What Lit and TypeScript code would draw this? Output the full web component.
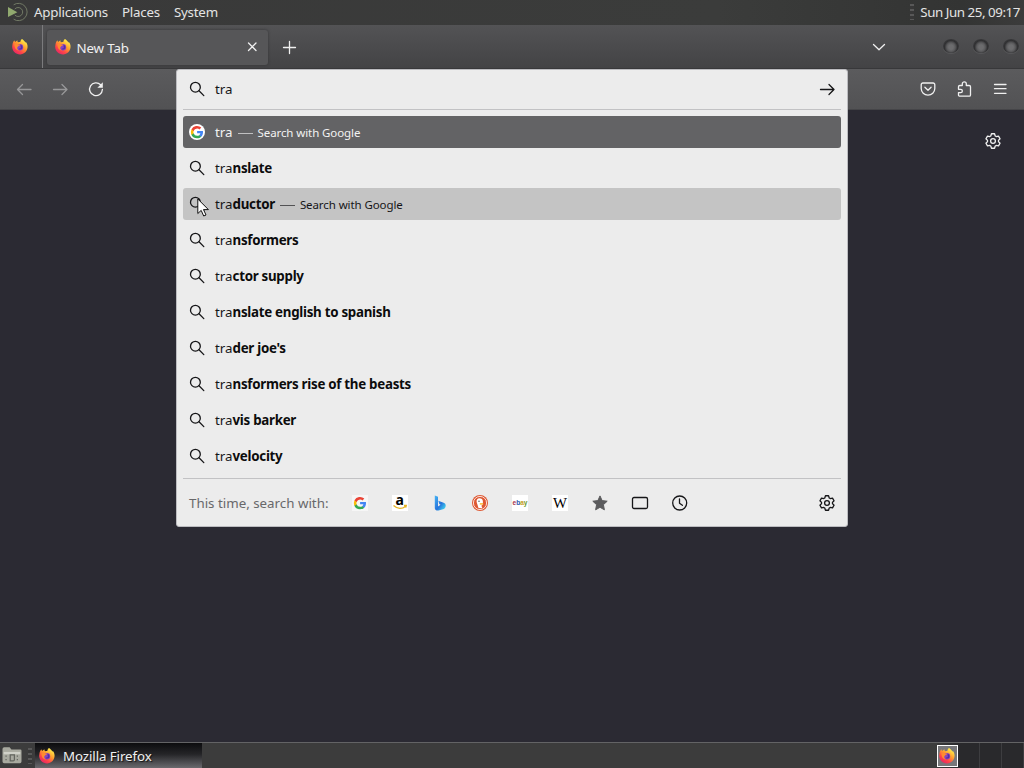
import { css, html, svg, LitElement } from "lit";
import { customElement, property } from "lit/decorators.js";
import { classMap } from "lit/directives/class-map.js";

interface Suggestion {
	typed: string;
	rest: string;
	engine?: string;
	state?: "selected" | "hover";
}

const SUGGESTIONS: Suggestion[] = [
	{ typed: "tra", rest: "", engine: "Search with Google", state: "selected" },
	{ typed: "tra", rest: "nslate" },
	{ typed: "tra", rest: "ductor", engine: "Search with Google", state: "hover" },
	{ typed: "tra", rest: "nsformers" },
	{ typed: "tra", rest: "ctor supply" },
	{ typed: "tra", rest: "nslate english to spanish" },
	{ typed: "tra", rest: "der joe's" },
	{ typed: "tra", rest: "nsformers rise of the beasts" },
	{ typed: "tra", rest: "vis barker" },
	{ typed: "tra", rest: "velocity" },
];

const ONE_OFFS = ["google", "amazon", "bing", "duck", "ebay", "wikipedia", "star", "tabs", "history"];

/** Six-toothed cog outline centred on 8,8. */
const gearPath = (() => {
	const points: string[] = [];
	for (let i = 0; i < 6; i++) {
		for (const [radius, offset] of [[5.5, -24], [7.4, -12], [7.4, 12], [5.5, 24]]) {
			const angle = ((i * 60 - 90 + offset) * Math.PI) / 180;
			points.push(`${(8 + radius * Math.cos(angle)).toFixed(2)} ${(8 + radius * Math.sin(angle)).toFixed(2)}`);
		}
	}
	return `M${points.join("L")}Z`;
})();

const googleG = svg`
	<path fill="#4285f4" d="M14 8.2c0-.5 0-.9-.1-1.3H8.1v2.400h3.300a2.900 2.900 0 0 1-1.200 1.900v1.600h2c1.200-1.100 1.800-2.700 1.800-4.600z"/>
	<path fill="#34a853" d="M8.100 14.200c1.700 0 3.100-.5 4.100-1.500l-2-1.500c-.5.400-1.300.6-2.100.6a3.700 3.700 0 0 1-3.500-2.500H2.500v1.600a6.200 6.200 0 0 0 5.600 3.300z"/>
	<path fill="#fbbc05" d="M4.600 9.300a3.700 3.700 0 0 1 0-2.400V5.300H2.500a6.200 6.200 0 0 0 0 5.600z"/>
	<path fill="#ea4335" d="M8.100 4.400c.9 0 1.800.3 2.400 1l1.800-1.800A6.200 6.200 0 0 0 2.500 5.300l2.100 1.600a3.700 3.700 0 0 1 3.500-2.500z"/>`;

const ICONS: Record<string, unknown> = {
	search: svg`<g class="line"><circle cx="6.400" cy="6.200" r="4.900"/><path d="M10 9.800 14.800 14.600"/></g>`,
	back: svg`<path class="line" d="M15 8.500H1.500M6.500 3.500 1.500 8.500 6.500 13.500"/>`,
	forward: svg`<path class="line" d="M1.500 8.500h13.500M10 3.500 15 8.500 10 13.500"/>`,
	reload: svg`<path class="line" d="M12.600 3.800A6.400 6.400 0 1 0 14.400 8.500"/><path fill="currentColor" d="M14.800 1.300v5.400H9.400z"/>`,
	close: svg`<path class="line" d="m4.500 4 7.500 7.500M12 4 4.500 11.500"/>`,
	plus: svg`<path class="line" d="M7.500 2.500v12M1.500 8.500h12"/>`,
	chevron: svg`<path class="line" d="m2.500 5.500 5.500 5.200 5.500-5.200"/>`,
	menu: svg`<path class="line" d="M2.500 3.500h11.500M2.500 7.700h11.500M2.500 12.300h11.500"/>`,
	pocket: svg`<g class="line"><path d="M2.900 2h10.200a1.700 1.700 0 0 1 1.700 1.700v3.900a6.800 6.500 0 0 1-13.600 0V3.700A1.700 1.700 0 0 1 2.900 2z"/><path d="M4.900 6.300 8 9.300l3.100-3"/></g>`,
	puzzle: svg`<path class="line" d="M6.300 4.500V2.800a2 2 0 0 1 4 0v1.700h2.900c.8 0 1.300.5 1.300 1.300v8.200c0 .7-.5 1.200-1.300 1.200H3.800c-.8 0-1.300-.5-1.300-1.200v-2.400h2.200a1.600 1.600 0 0 0 0-3.300H2.500V5.800c0-.8.5-1.300 1.300-1.300z"/>`,
	gear: svg`<g class="line"><path d=${gearPath}/><circle cx="8" cy="8" r="2.400"/></g>`,
	firefox: svg`
		<defs>
			<linearGradient id="fox" x1=".9" y1="0" x2=".2" y2="1">
				<stop offset=".1" stop-color="#fff04a"/><stop offset=".45" stop-color="#ff9a2e"/>
				<stop offset=".72" stop-color="#ff4548"/><stop offset="1" stop-color="#e0206c"/>
			</linearGradient>
		</defs>
		<path fill="url(#fox)" d="M15 4.800c-.3-.9-1-1.700-1.700-2.100.2.500.3.900.3 1.200C12.600 1.700 11 .9 9.900.1c-.7.5-1.500 1.600-1.600 2.900-.8-.1-1.500 0-2.100.3C5.300 2.800 5.400 1.700 5.500 1.200c-.8.4-1.500 1-1.900 1.600-.6-.1-1-.4-1.200-1.500C1.200 2.600.5 4.300.4 5.900A7.700 7.700 0 1 0 15 4.800z"/>
		<circle cx="8" cy="8.300" r="3.200" fill="#8a44c4"/>
		<path fill="#54309f" d="M8.500 5.500c1.700.7 2.300 2.300 1.800 3.700-.5 1.300-2.500 1.900-4 .7 1.200 0 2.100-.4 2.500-1.200z"/>
		<path fill="#ff8b30" d="M2.400 5.300c1.500-.8 2.900-.6 4 .1l2 .3c-.3.800-1.200 1-2 1.400-.4.700-1.200 1-1.200 2 0 1 .8 2 1.900 2.300-2.600.2-4.500-1.700-4.700-6.100z"/>`,
	google: svg`<rect width="16" height="16" fill="#f6f6f6"/>${googleG}`,
	googleRound: svg`<circle cx="8" cy="8" r="8" fill="#fff"/>${googleG}`,
	amazon: svg`<rect width="16" height="16" fill="#fff"/><text class="amazon" x="7.600" y="9.700">a</text>
		<path fill="none" stroke="#e5b322" stroke-width="1.300" d="M1.500 10.600c3.800 3.500 8.600 3.400 12 .8M12 10.500l2.300-.1-.6 2.200"/>`,
	bing: svg`<defs><linearGradient id="bing" x1="0" y1="0" x2="1" y2="1"><stop stop-color="#45b4f4"/><stop offset=".55" stop-color="#2673dc"/><stop offset=".9" stop-color="#41d1ee"/></linearGradient></defs>
		<path fill="url(#bing)" d="m2.800.6 3.200 1.200v9.600l2.600-1.600-1.300-.9-1-3.200 5.300 2.100c1.800.7 2.400 2 2 3.700-.2 1-.9 1.900-1.700 2.400L6.500 15.500c-1.400.5-3.700-.6-3.700-2.300z"/>`,
	duck: svg`<circle cx="8" cy="8" r="8" fill="#de5833"/><circle cx="8" cy="8" r="6.600" fill="none" stroke="#fff" stroke-width=".8"/>
		<path fill="#fff" d="M6.500 13 4.700 7.300C4.200 5 5.200 3.300 7.500 3.300c2 0 3.400 1.200 3.400 3.200v3l-1.500 1.300 1 2.400z"/>
		<circle cx="7" cy="6.300" r=".7" fill="#38414a"/><path fill="#fcb424" d="M7.800 8.200h3.400v1.400H7.800z"/>`,
	ebay: svg`<rect width="16" height="16" fill="#fff"/><text class="ebay" y="10.200" textLength="15" lengthAdjust="spacingAndGlyphs" x=".5"><tspan fill="#a93448">e</tspan><tspan fill="#2a57ac">b</tspan><tspan fill="#c99b18">a</tspan><tspan fill="#6a9a25">y</tspan></text>`,
	wikipedia: svg`<rect width="16" height="16" fill="#fff"/><text class="wiki" x="8" y="13" textLength="14" lengthAdjust="spacingAndGlyphs">W</text>`,
	star: svg`<path fill="#5b5b5d" stroke="#5b5b5d" stroke-linejoin="round" d="m8 .9 2.100 4.700 5.100.6-3.800 3.500 1 5.100L8 12.300l-4.400 2.500 1-5.100L.8 6.200l5.100-.6z"/>`,
	tabs: svg`<rect class="line" x=".5" y="2.500" width="15" height="11" rx="1.500"/>`,
	history: svg`<g class="line"><circle cx="7.700" cy="8" r="7"/><path d="M7.500 4v4.300l2.900 2"/></g>`,
	folder: svg`<path fill="#a9aaa0" d="M0 2.500Q0 1 1.500 1H6l1.500 2H15q1 0 1 1v9q0 1.500-1.500 1.500h-13Q0 14.500 0 13z"/>
		<path fill="#d0d1c8" d="M1 5h14v2H1z"/><path fill="none" stroke="#62645d" d="M6.500 7.500H10v4q0 1-1 1H6.500zM3 8v1m0 2v1m9.500-4v1m0 2v1"/>`,
	distro: svg`<g fill="none" stroke="#77806a" stroke-width=".8"><path d="M6 5.400a4 4 0 1 1 0 5.200"/><path d="M5 1.600a7.700 7.700 0 1 1 0 12.800"/></g><path fill="#91a96f" d="m0 3.500 8.300 4.700L0 12.500z"/>`,
};

@customElement("app-icon")
export class AppIcon extends LitElement {
	static override styles = css`
		:host {
			display: block;
			flex: none;
			width: 16px;
			height: 16px;
		}

		svg {
			display: block;
			width: 100%;
			height: 100%;
			overflow: visible;
		}

		.line {
			fill: none;
			stroke: currentColor;
			stroke-width: 1.3;
			stroke-linecap: round;
			stroke-linejoin: round;
		}

		.amazon {
			font: bold 14px "Noto Sans", sans-serif;
			text-anchor: middle;
		}

		.ebay {
			font: bold 7px "Liberation Sans", sans-serif;
		}

		.wiki {
			font: 14px "Liberation Serif", serif;
			text-anchor: middle;
		}
	`;

	@property({ type: String }) name = "search";

	override render() {
		return html`<svg viewBox="0 0 16 16" aria-hidden="true">${ICONS[this.name]}</svg>`;
	}
}

@customElement("url-bar")
export class UrlBar extends LitElement {
	static override styles = css`
		:host {
			display: block;
			box-sizing: border-box;
			background: #ececec;
			border: 1px solid #bcbcc0;
			border-radius: 3px;
			padding: 0 6px;
			color: #161618;
			font-size: 13.33px;
		}

		.input {
			display: flex;
			align-items: center;
			height: 37px;
			padding: 0 6px 2px;
			border-bottom: 1px solid #c2c2c4;
		}

		.value {
			flex: 1;
			padding-left: 10px;
		}

		.rows {
			display: grid;
			grid-auto-rows: 32px;
			row-gap: 4px;
			padding: 6px 0;
		}

		.row {
			display: flex;
			align-items: center;
			padding-left: 6px;
			border-radius: 3px;
			white-space: pre;
		}

		.row.selected {
			background: #636365;
			color: #f2f2f2;
		}

		.row.hover {
			background: #c4c4c4;
		}

		.title {
			padding-left: 10px;
		}

		.title b {
			color: #0c0c0d;
			letter-spacing: -0.28px;
		}

		.dash {
			width: 15px;
			height: 1px;
			margin: 2px 5px 0 5px;
			background: currentColor;
			opacity: 0.65;
		}

		.engine {
			padding-top: 1px;
			font-size: 11.5px;
			letter-spacing: -0.09px;
		}

		.one-offs {
			display: flex;
			align-items: center;
			height: 47px;
			border-top: 1px solid #c2c2c4;
			padding: 0 6px;
			gap: 24px;
		}

		.label {
			width: 139px;
			color: #68686a;
			white-space: nowrap;
		}

		.settings {
			margin-left: auto;
		}
	`;

	override render() {
		return html`
			<div class="input">
				<app-icon name="search"></app-icon>
				<span class="value">tra</span>
				<app-icon name="forward"></app-icon>
			</div>
			<div class="rows">
				${SUGGESTIONS.map(
					(item) => html`
						<div class=${classMap({ row: true, selected: item.state === "selected", hover: item.state === "hover" })}>
							<app-icon name=${item.state === "selected" ? "googleRound" : "search"}></app-icon>
							<span class="title">${item.typed}<b>${item.rest}</b></span>
							${item.engine ? html`<span class="dash"></span><span class="engine">${item.engine}</span>` : ""}
						</div>
					`,
				)}
			</div>
			<div class="one-offs">
				<span class="label">This time, search with:</span>
				${ONE_OFFS.map((name) => html`<app-icon name=${name}></app-icon>`)}
				<app-icon class="settings" name="gear"></app-icon>
			</div>
		`;
	}
}

@customElement("app-root")
export class AppRoot extends LitElement {
	static override styles = css`
		:host {
			display: flex;
			flex-direction: column;
			position: relative;
			width: 1024px;
			height: 768px;
			overflow: hidden;
			background: #2b2a33;
			color: #f0f0f0;
			font: 13.33px/18px "Noto Sans", sans-serif;
			cursor: default;
		}

		.panel {
			display: flex;
			align-items: center;
			box-sizing: border-box;
			height: 25px;
			padding: 0 4px 1px 8px;
			background: linear-gradient(90deg, #393939, #3b3c3b 70%, #333433 94%, #3b3b3b);
			color: #e4e4e4;
		}

		.distro {
			width: 18px;
			height: 18px;
			margin-right: 8px;
		}

		.menu-item {
			margin-right: 14px;
			letter-spacing: -0.22px;
		}

		.grip {
			width: 4px;
			height: 16px;
			background: repeating-linear-gradient(#585858 0 2px, #383838 2px 5px);
		}

		.clock {
			margin-left: 6px;
			letter-spacing: -0.44px;
			white-space: nowrap;
		}

		.panel .grip {
			margin-left: auto;
		}

		.tabs {
			display: flex;
			align-items: center;
			box-sizing: border-box;
			height: 44px;
			background: linear-gradient(#535355, #434345);
			border-bottom: 1px solid #38383a;
		}

		.pinned {
			display: flex;
			align-items: center;
			box-sizing: border-box;
			width: 43px;
			height: 43px;
			padding-left: 12px;
			border-right: 1px solid #7b7b7d;
		}

		.tab {
			display: flex;
			align-items: center;
			box-sizing: border-box;
			width: 221px;
			height: 35px;
			margin: 1px 14px 0 4px;
			padding: 0 8px;
			border-radius: 3px;
			background: #565658;
			box-shadow: 0 0 3px #343436;
		}

		.tab-title {
			flex: 1;
			padding-left: 5.5px;
			padding-top: 1px;
			letter-spacing: -0.15px;
		}

		.all-tabs {
			margin-left: auto;
			margin-right: 56px;
		}

		.window-buttons {
			display: flex;
			gap: 14px;
			margin-right: 5px;
			margin-top: -2px;
		}

		.window-button {
			box-sizing: border-box;
			width: 16px;
			height: 14px;
			border-radius: 50%;
			background: radial-gradient(ellipse at 50% 58%, #6c6c6e 0 20%, #5a5a5c 38%, #303032 58%, #38383a 70%);
			box-shadow: 0 1px 1px #59595b;
		}

		.toolbar {
			display: flex;
			align-items: center;
			box-sizing: border-box;
			height: 41px;
			padding: 0 16px;
			gap: 20px;
			background: linear-gradient(#5b5b5d, #525254);
			border-bottom: 1px solid #454548;
		}

		.disabled {
			opacity: 0.42;
		}

		.spacer {
			flex: 1;
		}

		.page {
			display: flex;
			flex: 1;
			justify-content: flex-end;
			padding: 23px 23px 0 0;
		}

		.taskbar {
			display: flex;
			align-items: center;
			box-sizing: border-box;
			height: 26px;
			border-top: 1px solid #636365;
			background: linear-gradient(90deg, #3c3c3c 0 935px, #29292c 960px);
		}

		.folder {
			width: 20px;
			height: 19px;
			margin: 0 6px 0 2px;
		}

		.task {
			display: flex;
			align-items: center;
			box-sizing: border-box;
			width: 167px;
			height: 25px;
			margin-left: 3px;
			padding-left: 4px;
			gap: 8px;
			background: linear-gradient(#0c0c0e, #252528 45%, #6a6a6e);
			text-shadow: 1px 1px 1px #111;
			letter-spacing: -0.1px;
		}

		.workspaces {
			display: flex;
			margin-left: auto;
			height: 25px;
			align-items: center;
		}

		.workspace {
			box-sizing: border-box;
			width: 22px;
			height: 25px;
			border-right: 1px solid #3d3d40;
		}

		.workspace.current {
			width: 21px;
			height: 22px;
			padding: 2px 1px;
			border: 1px solid #fff;
			background: #77777a;
		}

		.url-bar {
			position: absolute;
			left: 176px;
			top: 69px;
			width: 672px;
			height: 458px;
		}

		.pointer {
			position: absolute;
			left: 197px;
			top: 198px;
			width: 12px;
			height: 19px;
		}
	`;

	override render() {
		return html`
			<div class="panel">
				<app-icon class="distro" name="distro"></app-icon>
				${["Applications", "Places", "System"].map((label) => html`<span class="menu-item">${label}</span>`)}
				<span class="grip"></span>
				<span class="clock">Sun Jun 25, 09:17</span>
			</div>
			<div class="tabs">
				<div class="pinned"><app-icon name="firefox"></app-icon></div>
				<div class="tab">
					<app-icon name="firefox"></app-icon>
					<span class="tab-title">New Tab</span>
					<app-icon name="close"></app-icon>
				</div>
				<app-icon name="plus"></app-icon>
				<app-icon class="all-tabs" name="chevron"></app-icon>
				<div class="window-buttons">
					<span class="window-button"></span>
					<span class="window-button"></span>
					<span class="window-button"></span>
				</div>
			</div>
			<div class="toolbar">
				<app-icon class="disabled" name="back"></app-icon>
				<app-icon class="disabled" name="forward"></app-icon>
				<app-icon name="reload"></app-icon>
				<span class="spacer"></span>
				<app-icon name="pocket"></app-icon>
				<app-icon name="puzzle"></app-icon>
				<app-icon name="menu"></app-icon>
			</div>
			<div class="page"><app-icon name="gear"></app-icon></div>
			<div class="taskbar">
				<app-icon class="folder" name="folder"></app-icon>
				<span class="grip"></span>
				<div class="task"><app-icon name="firefox"></app-icon><span>Mozilla Firefox</span></div>
				<div class="workspaces">
					<span class="workspace current"><app-icon name="firefox"></app-icon></span>
					<span class="workspace"></span>
					<span class="workspace"></span>
					<span class="workspace"></span>
				</div>
			</div>
			<url-bar class="url-bar"></url-bar>
			<svg class="pointer" viewBox="0 0 12 19" aria-hidden="true">
				<path fill="#fff" stroke="#111" d="M.8 1v14.500l3.400-3.100 2.500 5.600 2.300-1-2.500-5.400h4.900z" />
			</svg>
		`;
	}
}
